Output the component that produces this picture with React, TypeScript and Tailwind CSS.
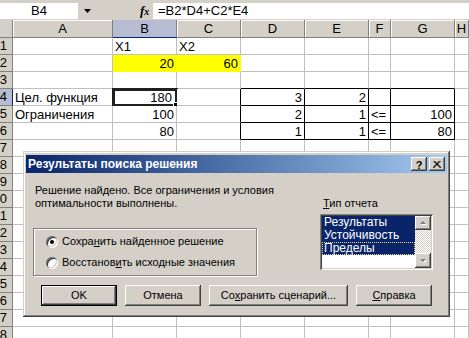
import React from 'react';

type Cell = { t: string; r?: boolean };
const DATA: Record<string, Cell> = {
  B1: { t: 'X1' },
  C1: { t: 'X2' },
  B2: { t: '20', r: true },
  C2: { t: '60', r: true },
  A4: { t: 'Цел. функция' },
  B4: { t: '180', r: true },
  D4: { t: '3', r: true },
  E4: { t: '2', r: true },
  A5: { t: 'Ограничения' },
  B5: { t: '100', r: true },
  D5: { t: '2', r: true },
  E5: { t: '1', r: true },
  F5: { t: '<=' },
  G5: { t: '100', r: true },
  B6: { t: '80', r: true },
  D6: { t: '1', r: true },
  E6: { t: '1', r: true },
  F6: { t: '<=' },
  G6: { t: '80', r: true },
};
const LETTERS = ['A', 'B', 'C', 'D', 'E', 'F', 'G', 'H'];

function GridCell({ row, col }: { row: number; col: number }) {
  const key = LETTERS[col] + row;
  const c = DATA[key];
  const rightBlack = row >= 4 && row <= 6 && col >= 2 && col <= 6;
  const bottomBlack = row >= 3 && row <= 6 && col >= 3 && col <= 6;
  const yellow = row === 2 && (col === 1 || col === 2);
  const selected = row === 4 && col === 1;
  let cls = 'relative h-[17px] border-r border-b pt-[2px] text-[13px] leading-[14px] whitespace-nowrap';
  cls += selected ? ' pl-[2px] pr-[4px]' : ' px-[2px]';
  cls += rightBlack ? ' border-r-black' : yellow ? ' border-r-[#ffff00]' : ' border-r-[#c0c0c0]';
  cls += bottomBlack ? ' border-b-black' : yellow ? ' border-b-[#ffff00]' : ' border-b-[#c0c0c0]';
  cls += yellow ? ' bg-[#ffff00]' : ' bg-white';
  cls += c && c.r ? ' text-right' : ' text-left';
  return (
    <div className={cls}>
      {c ? c.t : ''}
      {selected && (
        <>
          <div className="absolute left-[-1px] top-[-1px] right-[-2px] bottom-[-2px] border-[3px] border-[#202020] pointer-events-none" />
          <div className="absolute right-[-4px] bottom-[-4px] w-[7px] h-[7px] bg-black border border-white" />
        </>
      )}
    </div>
  );
}

function Raised({ className, children }: { className: string; children?: React.ReactNode }) {
  return (
    <div
      className={
        'bg-[#d4d0c8] shadow-[inset_-1px_-1px_0_#404040,inset_1px_1px_0_#ffffff,inset_-2px_-2px_0_#808080,inset_2px_2px_0_#d4d0c8] ' +
        className
      }
    >
      {children}
    </div>
  );
}

function Arrow({ up }: { up: boolean }) {
  return (
    <svg width="9" height="6" viewBox="0 0 9 6">
      {up ? (
        <>
          <polygon points="2,5 5,2 8,5" fill="#ffffff" />
          <polygon points="1,4 4,1 7,4" fill="#808080" />
        </>
      ) : (
        <>
          <polygon points="2,2 5,5 8,2" fill="#ffffff" />
          <polygon points="1,1 4,4 7,1" fill="#808080" />
        </>
      )}
    </svg>
  );
}

function Radio({ checked }: { checked: boolean }) {
  return (
    <div className="w-[12px] h-[12px] rounded-full bg-white shadow-[inset_1px_1px_0_#808080,inset_-1px_-1px_0_#ffffff,inset_2px_2px_0_#404040,inset_-2px_-2px_0_#d4d0c8] flex items-center justify-center shrink-0">
      {checked && <div className="w-[4px] h-[4px] rounded-full bg-black" />}
    </div>
  );
}

export default function App() {
  const rows = Array.from({ length: 18 }, (_, i) => i + 1);
  return (
    <div className="relative w-[469px] h-[338px] overflow-hidden bg-white text-black font-['Liberation_Sans',Arial,sans-serif]">
      {/* formula bar */}
      <div className="h-[20px] bg-[#d4d0c8] flex items-start pt-[3px]">
        <div className="w-[78px] h-[16px] bg-white text-[13px] leading-[16px] text-center">B4</div>
        <div className="w-[18px] h-[16px] flex items-center justify-center">
          <svg width="7" height="4" viewBox="0 0 7 4">
            <polygon points="0,0 7,0 3.5,4" fill="#000" />
          </svg>
        </div>
        <div className="w-[44px]" />
        <div className="w-[13px] h-[16px] text-[13px] leading-[16px] italic font-bold font-['Liberation_Serif',serif]">
          f<span className="text-[10px]">x</span>
        </div>
        <div className="flex-1 h-[16px] bg-white pl-[5px] text-[13px] leading-[16px]">=B2*D4+C2*E4</div>
      </div>

      {/* sheet */}
      <div className="grid grid-cols-[13px_100px_64px_64px_64px_64px_22px_64px_1fr]">
        <div className="h-[18px] bg-[#d4d0c8] border-r border-b border-[#808080]" />
        {LETTERS.map((l) => (
          <div
            key={l}
            className={
              l === 'B'
                ? 'h-[18px] bg-[#b6bdd2] border-r border-r-[#808080] border-b border-b-[#0a246a] text-center text-[13px] leading-[17px]'
                : 'h-[18px] bg-[#d4d0c8] border-r border-b border-[#808080] text-center text-[13px] leading-[17px] shadow-[inset_1px_1px_0_#ffffff]'
            }
          >
            {l}
          </div>
        ))}
        {rows.map((r) => (
          <React.Fragment key={r}>
            <div
              className={
                r === 4
                  ? 'h-[17px] bg-[#b6bdd2] border-r border-r-[#0a246a] border-b border-b-[#808080] text-[13px] leading-[16px] pr-[5px] overflow-hidden whitespace-nowrap flex justify-end'
                  : 'h-[17px] bg-[#d4d0c8] border-r border-b border-[#808080] text-[13px] leading-[16px] pr-[5px] overflow-hidden whitespace-nowrap flex justify-end'
              }
            >
              <span className="shrink-0">{r}</span>
            </div>
            {LETTERS.map((_, ci) => (
              <GridCell key={ci} row={r} col={ci} />
            ))}
          </React.Fragment>
        ))}
      </div>

      {/* dialog */}
      <div className="absolute left-[23px] top-[151px] w-[427px] h-[166px] bg-[#d4d0c8] px-[3px] pt-[4px] flex flex-col text-[11px] shadow-[inset_-1px_-1px_0_#404040,inset_1px_1px_0_#d4d0c8,inset_-2px_-2px_0_#808080,inset_2px_2px_0_#ffffff]">
        <div className="h-[18px] flex items-center pl-[2px] pr-[2px] bg-gradient-to-r from-[#0a246a] to-[#a6caf0]">
          <span className="text-white font-bold text-[12px] leading-[14px]">Результаты поиска решения</span>
          <div className="flex-1" />
          <Raised className="w-[16px] h-[14px] flex items-center justify-center text-[11px] font-bold leading-[12px] pt-[1px]">
            ?
          </Raised>
          <Raised className="w-[16px] h-[14px] ml-[2px] flex items-center justify-center">
            <svg width="8" height="7" viewBox="0 0 8 7">
              <path d="M0.5 0 L7.5 7 M7.5 0 L0.5 7 M1.5 0 L8.5 7 M6.5 0 L-0.5 7" stroke="#000" strokeWidth="1" />
            </svg>
          </Raised>
        </div>

        <div className="flex">
          <div className="ml-[7px] w-[224px] flex flex-col">
            <div className="mt-[11px] ml-[2px] leading-[13px] whitespace-nowrap">
              Решение найдено. Все ограничения и условия
              <br />
              оптимальности выполнены.
            </div>
            <div className="mt-[18px] h-[48px] border border-[#808080] shadow-[inset_1px_1px_0_#ffffff,1px_1px_0_#ffffff] flex flex-col justify-center gap-[8px] pl-[12px]">
              <div className="flex items-center gap-[4px] leading-[13px]">
                <Radio checked />
                <span>
                  Сохра<span className="underline">н</span>ить найденное решение
                </span>
              </div>
              <div className="flex items-center gap-[4px] leading-[13px]">
                <Radio checked={false} />
                <span className="whitespace-nowrap">
                  Восстанов<span className="underline">и</span>ть исходные значения
                </span>
              </div>
            </div>
          </div>
          <div className="ml-[63px] flex flex-col">
            <div className="mt-[24px] leading-[13px] ml-[3px]">
              <span className="underline">Т</span>ип отчета
            </div>
            <div className="mt-[4px] w-[113px] h-[56px] bg-white p-[2px] flex shadow-[inset_1px_1px_0_#808080,inset_-1px_-1px_0_#ffffff,inset_2px_2px_0_#404040,inset_-2px_-2px_0_#d4d0c8]">
              <div className="flex-1 flex flex-col text-white leading-[13px] text-[12px]">
                <div className="h-[13px] bg-[#0a246a] pl-[2px]">Результаты</div>
                <div className="h-[13px] bg-[#0a246a] pl-[2px]">Устойчивость</div>
                <div className="h-[13px] bg-[#0a246a] pl-[1px] border border-dotted border-[#f0d890] leading-[11px]">Пределы</div>
              </div>
              <div className="w-[16px] flex flex-col">
                <Raised className="h-[14px] flex items-center justify-center">
                  <Arrow up />
                </Raised>
                <div className="flex-1 bg-[repeating-conic-gradient(#d4d0c8_0%_25%,#ffffff_0%_50%)] bg-[length:2px_2px]" />
                <Raised className="h-[15px] flex items-center justify-center">
                  <Arrow up={false} />
                </Raised>
              </div>
            </div>
          </div>
        </div>

        <div className="mt-[9px] ml-[15px] flex gap-[8px]">
          <div className="w-[76px] h-[21px] flex items-center justify-center bg-[#d4d0c8] shadow-[inset_0_0_0_1px_#000000,inset_-2px_-2px_0_#404040,inset_2px_2px_0_#ffffff,inset_-3px_-3px_0_#808080]">
            OK
          </div>
          <Raised className="w-[76px] h-[21px] flex items-center justify-center">Отмена</Raised>
          <Raised className="w-[139px] h-[21px] flex items-center justify-center">
            <span>
              Со<span className="underline">х</span>ранить сценарий...
            </span>
          </Raised>
          <Raised className="w-[76px] h-[21px] flex items-center justify-center">
            <span>
              <span className="underline">С</span>правка
            </span>
          </Raised>
        </div>
      </div>
    </div>
  );
}
